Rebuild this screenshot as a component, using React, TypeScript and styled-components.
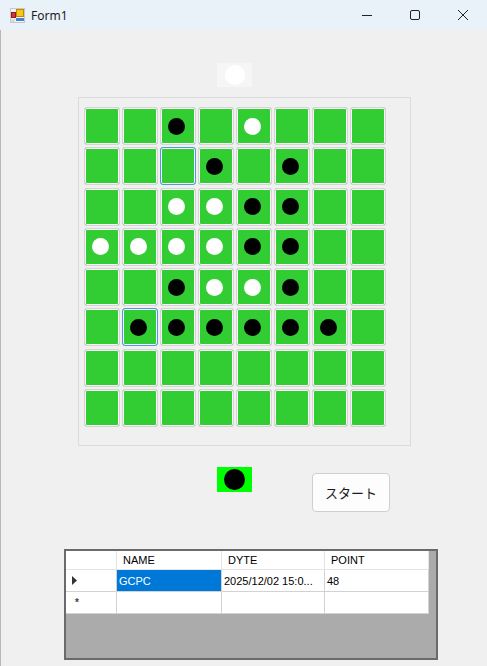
import React from "react";
import styled, { createGlobalStyle } from "styled-components";

const GlobalStyle = createGlobalStyle`
  html, body {
    margin: 0;
    padding: 0;
  }
  body {
    background: #f0f0f0;
    font-family: "Liberation Sans", Arial, sans-serif;
  }
`;

const Window = styled.div`
  width: 487px;
  height: 666px;
  display: flex;
  flex-direction: column;
  background: #f0f0f0;
  box-shadow: inset 1px 0 0 #b8b8b8;
  overflow: hidden;
`;

const TitleBar = styled.div`
  height: 30px;
  flex: none;
  display: flex;
  align-items: center;
  background: #eaf2f9;
`;

const AppIcon = styled.div`
  margin-left: 10px;
  width: 15px;
  height: 15px;
  display: flex;
`;

const Title = styled.span`
  margin-left: 6px;
  font-family: "Noto Sans", "Liberation Sans", sans-serif;
  font-size: 12px;
  color: #1a1a1a;
`;

const Spacer = styled.div`
  flex: 1;
`;

const CaptionButton = styled.div`
  width: 48px;
  height: 30px;
  display: flex;
  align-items: center;
  justify-content: center;
`;

const Content = styled.div`
  flex: 1;
  display: flex;
  flex-direction: column;
  align-items: flex-start;
`;

const TopIndicator = styled.div`
  margin: 33px 0 0 217px;
  width: 35px;
  height: 24px;
  background: #f6f6f6;
  display: flex;
  align-items: center;
  justify-content: center;
`;

const Piece = styled.span<{ $color: "black" | "white"; $size: number }>`
  display: block;
  width: ${(p) => p.$size}px;
  height: ${(p) => p.$size}px;
  border-radius: 50%;
  background: ${(p) => (p.$color === "black" ? "#000" : "#fff")};
`;

const BoardPanel = styled.div`
  margin: 10px 0 0 78px;
  width: 333px;
  height: 349px;
  box-sizing: border-box;
  border: 1px solid #dcdcdc;
  padding: 9px 0 0 5px;
  display: grid;
  grid-template-columns: repeat(8, 36px);
  grid-template-rows: repeat(8, 38px);
  column-gap: 2px;
  row-gap: 2.3px;
  align-content: start;
`;

const Cell = styled.div<{ $focus?: boolean }>`
  box-sizing: border-box;
  border: 1px solid ${(p) => (p.$focus ? "#4d9be6" : "#d4d4d4")};
  border-radius: 3px;
  background: #32cd32;
  box-shadow: inset 0 0 0 1px #f8f8f8;
  display: flex;
  align-items: center;
  justify-content: center;
  padding-right: 3px;
`;

const ControlRow = styled.div`
  margin-top: 21px;
  padding-left: 217px;
  display: flex;
  align-items: flex-start;
`;

const TurnIndicator = styled.div`
  width: 35px;
  height: 25px;
  background: #00ff00;
  display: flex;
  align-items: center;
  justify-content: center;
`;

const StartButton = styled.button`
  margin: 6px 0 0 60px;
  width: 78px;
  height: 39px;
  background: #fdfdfd;
  border: 1px solid #cfcfcf;
  border-radius: 4px;
  font-family: "Noto Sans CJK JP", sans-serif;
  font-size: 13px;
  color: #1b1b1b;
  padding: 0;
`;

const DataGrid = styled.div`
  margin: 37px 0 0 64px;
  width: 374px;
  height: 111px;
  box-sizing: border-box;
  border: 2px solid #6a6a6a;
  background: #ababab;
  display: grid;
  grid-template-columns: 51px 105px 103px 104px;
  grid-template-rows: 19px 22px 22px;
  align-content: start;
  justify-content: start;
`;

const GridCell = styled.div<{ $header?: boolean; $selected?: boolean }>`
  box-sizing: border-box;
  display: flex;
  align-items: center;
  border-right: 1px solid ${(p) => (p.$header ? "#e4e4e4" : "#d2d2d2")};
  border-bottom: 1px solid ${(p) => (p.$header ? "#e4e4e4" : "#d2d2d2")};
  padding-left: ${(p) => (p.$header ? 6 : 2)}px;
  background: ${(p) => (p.$selected ? "#0078d7" : "#fff")};
  color: ${(p) => (p.$selected ? "#fff" : "#000")};
  font-size: 11px;
  white-space: nowrap;
  overflow: hidden;
`;

const RowHeader = styled(GridCell)`
  padding-left: 6px;
`;

const Star = styled.span`
  margin-left: 3px;
  font-size: 10px;
  color: #444;
  font-weight: bold;
`;

const board = [
  "..B.W...",
  "..hB.B..",
  "..WWBB..",
  "WWWWBB..",
  "..BWWB..",
  ".HBBBBB.",
  "........",
  "........",
];

const App = () => {
  return (
    <Window>
      <GlobalStyle />
      <TitleBar>
        <AppIcon>
          <svg width="15" height="15" viewBox="0 0 15 15">
            <rect x="0.5" y="0.5" width="14" height="14" fill="#f4f4f4" stroke="#c8c8c8" />
            <rect x="1.5" y="4.5" width="4" height="5" fill="#d33" stroke="#8c1c1c" />
            <rect x="6.5" y="1.5" width="7" height="7" fill="#f6c81e" stroke="#c08a00" />
            <rect x="6" y="10" width="8" height="3" fill="#4a80d8" />
            <rect x="1" y="11" width="4" height="3" fill="#ddd" />
          </svg>
        </AppIcon>
        <Title>Form1</Title>
        <Spacer />
        <CaptionButton>
          <svg width="12" height="12" viewBox="0 0 12 12">
            <path d="M1 6.5h10" stroke="#222" strokeWidth="1" />
          </svg>
        </CaptionButton>
        <CaptionButton>
          <svg width="12" height="12" viewBox="0 0 12 12">
            <rect x="1.5" y="1.5" width="9" height="9" rx="1.5" fill="none" stroke="#222" />
          </svg>
        </CaptionButton>
        <CaptionButton>
          <svg width="12" height="12" viewBox="0 0 12 12">
            <path d="M1 1l10 10M11 1L1 11" stroke="#222" strokeWidth="1" />
          </svg>
        </CaptionButton>
      </TitleBar>
      <Content>
        <TopIndicator>
          <Piece $color="white" $size={20} />
        </TopIndicator>
        <BoardPanel>
          {board.map((row, r) =>
            row.split("").map((c, i) => (
              <Cell key={`${r}-${i}`} $focus={c === "h" || c === "H"}>
                {(c === "B" || c === "H") && <Piece $color="black" $size={17} />}
                {c === "W" && <Piece $color="white" $size={17} />}
              </Cell>
            ))
          )}
        </BoardPanel>
        <ControlRow>
          <TurnIndicator>
            <Piece $color="black" $size={21} />
          </TurnIndicator>
          <StartButton>スタート</StartButton>
        </ControlRow>
        <DataGrid>
          <RowHeader $header />
          <GridCell $header>NAME</GridCell>
          <GridCell $header>DYTE</GridCell>
          <GridCell $header>POINT</GridCell>

          <RowHeader>
            <svg width="5" height="9" viewBox="0 0 5 9">
              <path d="M0 0l5 4.5L0 9z" fill="#333" />
            </svg>
          </RowHeader>
          <GridCell $selected>GCPC</GridCell>
          <GridCell>2025/12/02 15:0...</GridCell>
          <GridCell>48</GridCell>

          <RowHeader>
            <Star>*</Star>
          </RowHeader>
          <GridCell />
          <GridCell />
          <GridCell />
        </DataGrid>
      </Content>
    </Window>
  );
};

export default App;
